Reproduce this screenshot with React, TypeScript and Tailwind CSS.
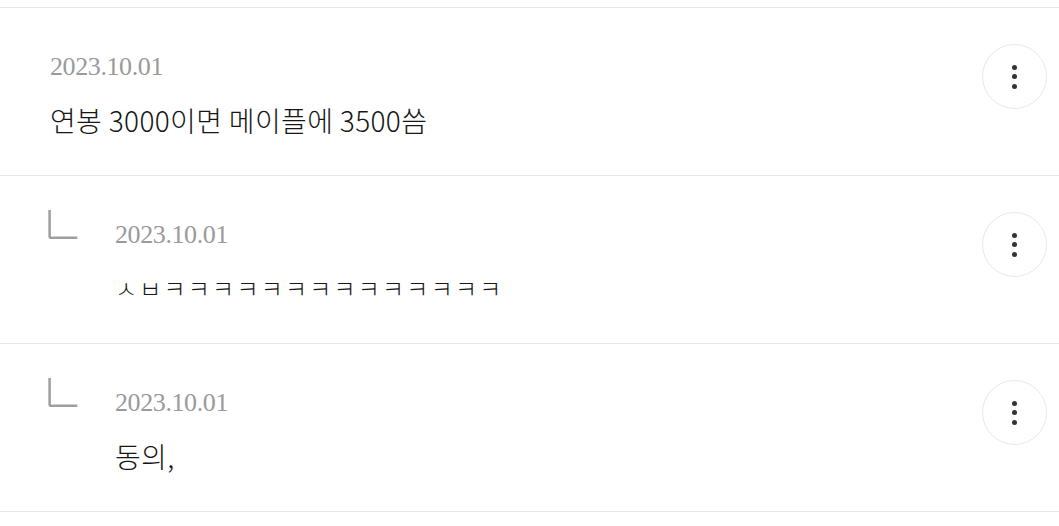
import React from "react";

function MoreButton() {
  return (
    <button className="mt-[36px] flex h-[65px] w-[65px] shrink-0 flex-col items-center justify-center gap-[4.5px] rounded-full border border-[#e8e8e8] bg-white">
      <span className="block h-[5px] w-[5px] rounded-full bg-[#333]" />
      <span className="block h-[5px] w-[5px] rounded-full bg-[#333]" />
      <span className="block h-[5px] w-[5px] rounded-full bg-[#333]" />
    </button>
  );
}

function ReplyIcon() {
  return (
    <svg width="32" height="32" viewBox="0 0 32 32" fill="none">
      <path
        d="M1.6 0 V26.2 Q1.6 27.8 3.2 27.8 H29.3"
        stroke="#9e9e9e"
        strokeWidth="2.5"
      />
    </svg>
  );
}

type Item = { date: string; text: string; reply: boolean; jamo?: boolean };

const items: Item[] = [
  { date: "2023.10.01", text: "연봉 3000이면 메이플에 3500씀", reply: false },
  { date: "2023.10.01", text: "ㅅㅂㅋㅋㅋㅋㅋㅋㅋㅋㅋㅋㅋㅋㅋㅋ", reply: true, jamo: true },
  { date: "2023.10.01", text: "동의,", reply: true },
];

function Row({ item }: { item: Item }) {
  return (
    <div className={`flex items-start border-b border-[#e8e8e8] pr-[12px] ${item.reply ? "pl-[48px]" : "pl-[50px]"}`}>
      {item.reply && (
        <div className="w-[67px] shrink-0 pt-[34px]">
          <ReplyIcon />
        </div>
      )}
      <div className="flex-1 pt-[43px] pb-[35px]">
        <div className="font-['Liberation_Serif',serif] text-[26px] leading-[32px] tracking-[-0.4px] text-[#9a9a9a]">
          {item.date}
        </div>
        <div
          className={`mt-[17px] font-['Noto_Sans_CJK_KR',sans-serif] font-light leading-[40px] text-[#161616] ${
            item.jamo ? "text-[24px] tracking-[2.2px]" : "text-[28px] tracking-[0.35px]"
          }`}
        >
          {item.text}
        </div>
      </div>
      <MoreButton />
    </div>
  );
}

export default function App() {
  return (
    <div className="min-h-screen bg-white pt-[7px]">
      <div className="border-t border-[#e8e8e8]">
        {items.map((it, i) => (
          <Row key={i} item={it} />
        ))}
      </div>
    </div>
  );
}
